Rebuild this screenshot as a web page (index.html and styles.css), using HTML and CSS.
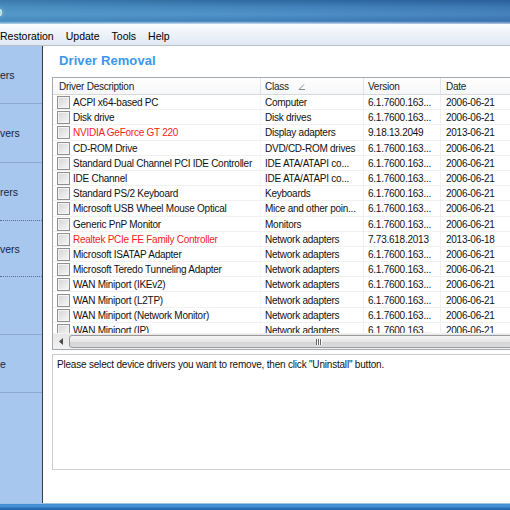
FILE: index.html
```html
<!DOCTYPE html>
<html>
<head>
<meta charset="utf-8">
<link rel="stylesheet" href="styles.css">
</head>
<body>
<div class="window">
  <div class="titlebar"><span class="title">o</span></div>
  <div class="menubar">
    <span class="menu first">Restoration</span>
    <span class="menu">Update</span>
    <span class="menu">Tools</span>
    <span class="menu">Help</span>
  </div>
  <div class="frame">
    <nav class="sidebar">
      <div class="nav"><span>ers</span></div>
      <div class="nav tall"><span>vers</span></div>
      <div class="nav dotted"><span>rers</span></div>
      <div class="nav dotted short"><span>vers</span></div>
      <div class="nav"><span></span></div>
      <div class="nav"><span>e</span></div>
      <div class="nav last"></div>
    </nav>
    <main class="content">
      <h1 class="heading">Driver Removal</h1>
      <div class="list">
        <div class="lhead">
          <div class="c c1">Driver Description</div>
          <div class="c c2">Class <svg class="sort" width="8" height="7" viewBox="0 0 8 7"><path d="M1 6.5 L6 1.5 M1 6.5 H7" stroke="#8a8a8a" stroke-width="1" fill="none"/></svg></div>
          <div class="c c3">Version</div>
          <div class="c c4">Date</div>
        </div>
        <div class="rows">
          <div class="row"><div class="c c1"><span class="cb"></span>ACPI x64-based PC</div><div class="c c2">Computer</div><div class="c c3">6.1.7600.163...</div><div class="c c4">2006-06-21</div></div>
          <div class="row"><div class="c c1"><span class="cb"></span>Disk drive</div><div class="c c2">Disk drives</div><div class="c c3">6.1.7600.163...</div><div class="c c4">2006-06-21</div></div>
          <div class="row"><div class="c c1 red"><span class="cb"></span>NVIDIA GeForce GT 220</div><div class="c c2">Display adapters</div><div class="c c3">9.18.13.2049</div><div class="c c4">2013-06-21</div></div>
          <div class="row"><div class="c c1"><span class="cb"></span>CD-ROM Drive</div><div class="c c2">DVD/CD-ROM drives</div><div class="c c3">6.1.7600.163...</div><div class="c c4">2006-06-21</div></div>
          <div class="row"><div class="c c1"><span class="cb"></span>Standard Dual Channel PCI IDE Controller</div><div class="c c2">IDE ATA/ATAPI co...</div><div class="c c3">6.1.7600.163...</div><div class="c c4">2006-06-21</div></div>
          <div class="row"><div class="c c1"><span class="cb"></span>IDE Channel</div><div class="c c2">IDE ATA/ATAPI co...</div><div class="c c3">6.1.7600.163...</div><div class="c c4">2006-06-21</div></div>
          <div class="row"><div class="c c1"><span class="cb"></span>Standard PS/2 Keyboard</div><div class="c c2">Keyboards</div><div class="c c3">6.1.7600.163...</div><div class="c c4">2006-06-21</div></div>
          <div class="row"><div class="c c1"><span class="cb"></span>Microsoft USB Wheel Mouse Optical</div><div class="c c2">Mice and other poin...</div><div class="c c3">6.1.7600.163...</div><div class="c c4">2006-06-21</div></div>
          <div class="row"><div class="c c1"><span class="cb"></span>Generic PnP Monitor</div><div class="c c2">Monitors</div><div class="c c3">6.1.7600.163...</div><div class="c c4">2006-06-21</div></div>
          <div class="row"><div class="c c1 red"><span class="cb"></span>Realtek PCIe FE Family Controller</div><div class="c c2">Network adapters</div><div class="c c3">7.73.618.2013</div><div class="c c4">2013-06-18</div></div>
          <div class="row"><div class="c c1"><span class="cb"></span>Microsoft ISATAP Adapter</div><div class="c c2">Network adapters</div><div class="c c3">6.1.7600.163...</div><div class="c c4">2006-06-21</div></div>
          <div class="row"><div class="c c1"><span class="cb"></span>Microsoft Teredo Tunneling Adapter</div><div class="c c2">Network adapters</div><div class="c c3">6.1.7600.163...</div><div class="c c4">2006-06-21</div></div>
          <div class="row"><div class="c c1"><span class="cb"></span>WAN Miniport (IKEv2)</div><div class="c c2">Network adapters</div><div class="c c3">6.1.7600.163...</div><div class="c c4">2006-06-21</div></div>
          <div class="row"><div class="c c1"><span class="cb"></span>WAN Miniport (L2TP)</div><div class="c c2">Network adapters</div><div class="c c3">6.1.7600.163...</div><div class="c c4">2006-06-21</div></div>
          <div class="row"><div class="c c1"><span class="cb"></span>WAN Miniport (Network Monitor)</div><div class="c c2">Network adapters</div><div class="c c3">6.1.7600.163...</div><div class="c c4">2006-06-21</div></div>
          <div class="row"><div class="c c1"><span class="cb"></span>WAN Miniport (IP)</div><div class="c c2">Network adapters</div><div class="c c3">6.1.7600.163...</div><div class="c c4">2006-06-21</div></div>
        </div>
        <div class="hscroll">
          <div class="sbtn"><svg width="4" height="7" viewBox="0 0 4 7"><path d="M4 0 L0 3.5 L4 7 Z" fill="#4a4a4a"/></svg></div>
          <div class="thumb"><span class="grip"><i></i><i></i><i></i></span></div>
        </div>
      </div>
      <div class="info">Please select device drivers you want to remove, then click "Uninstall" button.</div>
    </main>
  </div>
  <div class="bottomframe"></div>
</div>
</body>
</html>
```

FILE: styles.css
```css
html, body {
  margin: 0;
  padding: 0;
}
body {
  width: 510px;
  height: 510px;
  overflow: hidden;
  background: #fff;
  font-family: "Liberation Sans", Arial, sans-serif;
  color: #000;
}
.window {
  width: 590px;
  height: 510px;
  display: flex;
  flex-direction: column;
}
.titlebar {
  height: 24px;
  flex: none;
  display: flex;
  align-items: center;
  background:
    linear-gradient(90deg, rgba(90, 170, 200, 0.25) 0%, rgba(0, 0, 0, 0) 40%, rgba(10, 30, 120, 0.18) 100%),
    linear-gradient(180deg, #2f6aa0 0%, #4586bd 30%, #5193c8 60%, #3f7fb9 88%, #9cc0e0 96%, #d8e6f4 100%);
}
.title {
  color: #f4f8fc;
  font-size: 13px;
  margin-left: -5px;
  margin-top: -2px;
  text-shadow: 0 0 5px rgba(255, 255, 255, 0.7);
}
.menubar {
  height: 22px;
  flex: none;
  box-sizing: border-box;
  padding-top: 3px;
  display: flex;
  align-items: center;
  font-size: 10.5px;
  border-bottom: 1px solid #b7c0cc;
  background: linear-gradient(180deg, #fbfcfe 0%, #eef3f9 45%, #e0e8f3 100%);
}
.menu {
  padding: 0 6px;
}
.menu.first {
  margin-left: -6px;
}
.frame {
  flex: 1;
  display: flex;
  min-height: 0;
}
.sidebar {
  width: 42px;
  flex: none;
  background: #a8c7ef;
  border-right: 1px solid #3c3c3c;
  display: flex;
  flex-direction: column;
}
.nav {
  height: 57px;
  flex: none;
  border-bottom: 1px solid #8da9d0;
  display: flex;
  align-items: center;
  font-size: 10.5px;
  color: #1c2436;
}
.nav.tall {
  height: 58px;
}
.nav.dotted {
  border-bottom: 1px dotted #5a6f90;
}
.nav.short {
  height: 55px;
}
.nav.last {
  flex: 1;
  border-bottom: none;
}
.content {
  flex: 1;
  padding: 7px 0 0 9px;
  display: flex;
  flex-direction: column;
  background: #fff;
}
.heading {
  margin: 0 0 8px 7px;
  height: 16px;
  line-height: 16px;
  font-size: 13px;
  font-weight: bold;
  color: #3a97ec;
  letter-spacing: 0.1px;
}
.list {
  border: 1px solid #a3a9b2;
  display: flex;
  flex-direction: column;
  font-size: 10px;
  letter-spacing: -0.25px;
}
.lhead {
  height: 17px;
  box-sizing: border-box;
  display: flex;
  border-bottom: 1px solid #d6d8dc;
  background: linear-gradient(180deg, #ffffff, #f6f7f9);
  color: #222;
}
.lhead .c {
  border-right: 1px solid #e2e3e6;
  padding-top: 1px;
}
.c {
  box-sizing: border-box;
  display: flex;
  align-items: center;
  white-space: nowrap;
  overflow: hidden;
  flex: none;
}
.c1 { width: 208px; padding-left: 4px; }
.lhead .c1 { padding-left: 6px; }
.c2 { width: 103px; padding-left: 4px; }
.c3 { width: 77px; padding-left: 4px; }
.c4 { width: 130px; padding-left: 5px; }
.sort {
  margin-left: 9px;
  margin-top: -1px;
}
.rows {
  height: 238px;
  overflow: hidden;
}
.row {
  height: 15.2px;
  display: flex;
  color: #111;
}
.row .c {
  box-shadow: inset 0 -1px 0 #f1f1f1;
}
.row .c2, .row .c3 {
  border-right: 1px solid #f0f0f0;
}
.row .c1 {
  border-right: 1px solid #f6f6f6;
}
.red {
  color: #f21c1c;
}
.cb {
  width: 13px;
  height: 13px;
  box-sizing: border-box;
  flex: none;
  margin-right: 3px;
  border: 1px solid #8e8f91;
  background: linear-gradient(135deg, #d3d3d3 0%, #e6e6e6 50%, #f7f7f7 100%);
  box-shadow: inset 0 0 0 1px #f4f4f4;
}
.hscroll {
  height: 16px;
  box-sizing: border-box;
  display: flex;
  background: linear-gradient(180deg, #e6e6e6, #f2f2f2);
  border-top: 1px solid #f4f4f4;
}
.sbtn {
  width: 16px;
  flex: none;
  display: flex;
  align-items: center;
  justify-content: center;
}
.thumb {
  flex: 1;
  margin: 1px 0;
  border: 1px solid #9a9a9a;
  border-radius: 3px;
  background: linear-gradient(180deg, #f5f5f5 0%, #e6e6e6 50%, #d4d4d4 51%, #dcdcdc 100%);
  display: flex;
  align-items: center;
  padding-left: 246px;
}
.grip {
  display: flex;
  gap: 1px;
}
.grip i {
  display: block;
  width: 1px;
  height: 6px;
  background: #666;
  box-shadow: 1px 0 0 #fff;
}
.info {
  margin-top: 4px;
  height: 116px;
  box-sizing: border-box;
  border: 1px solid #c9cbcf;
  border-bottom-color: #d2d3d6;
  padding: 3px 4px;
  font-size: 10px;
  letter-spacing: -0.2px;
  line-height: 14px;
  color: #111;
}
.bottomframe {
  height: 7px;
  flex: none;
  background: linear-gradient(180deg, #9cc4e6 0px, #9cc4e6 1px, #3d8bd0 1px, #4a97da 3px, #2f74bd 5px, #1f5ea8 7px);
}
```
